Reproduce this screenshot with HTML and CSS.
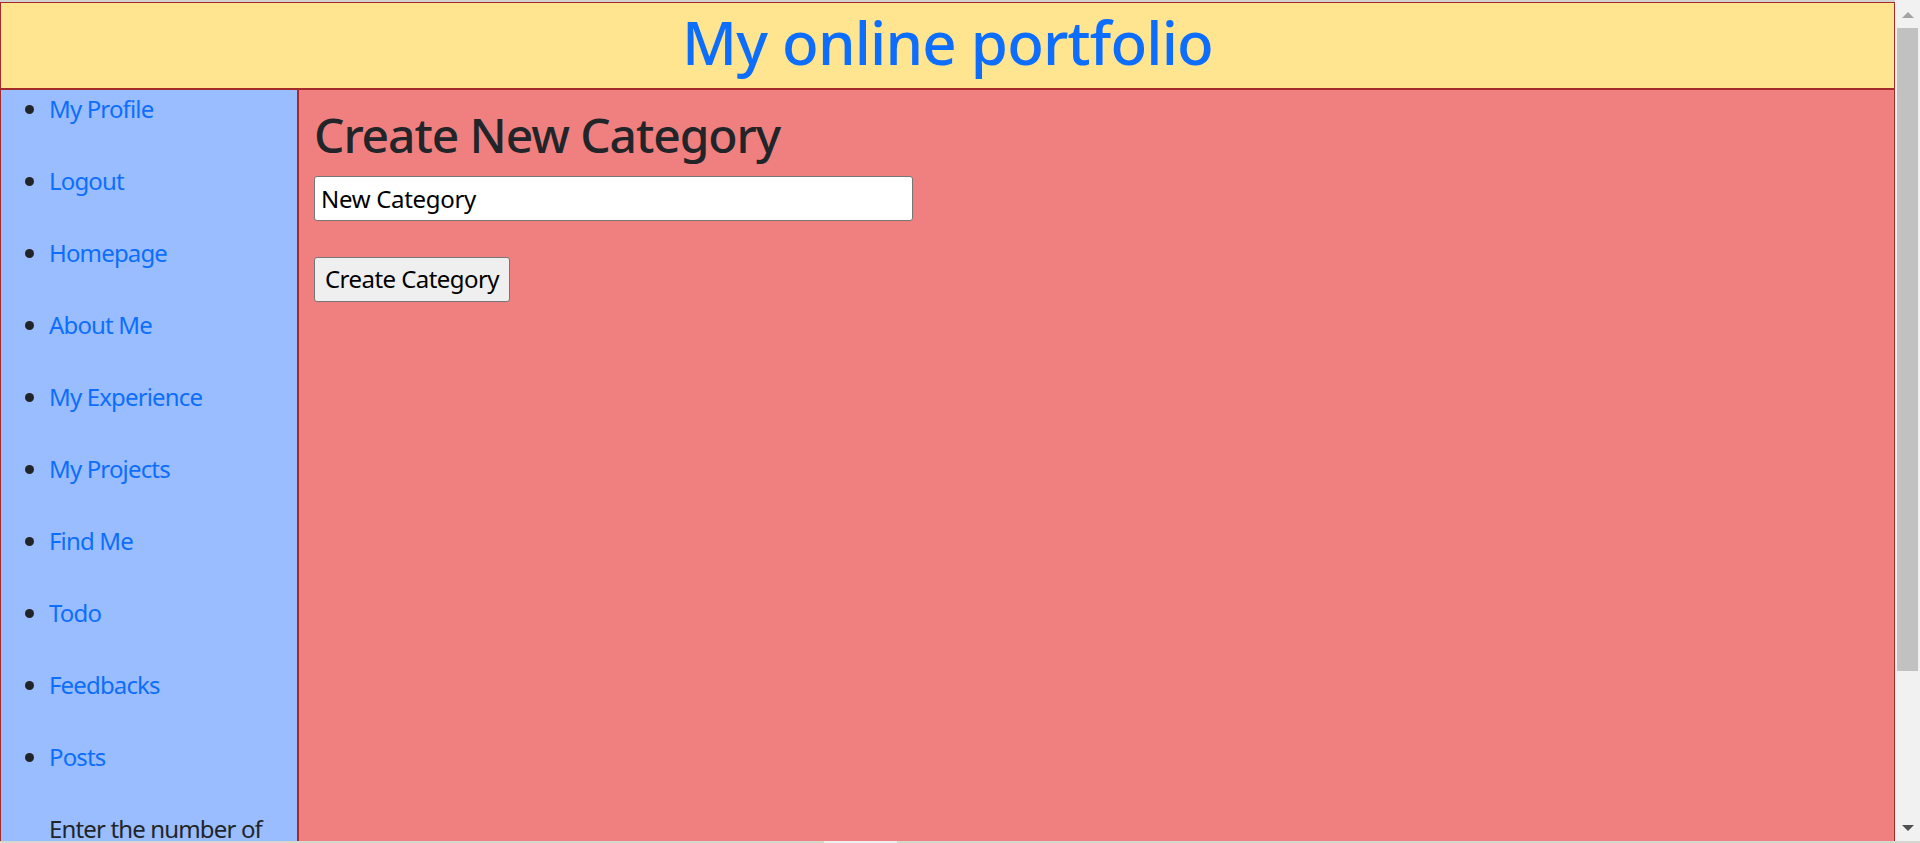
FILE: index.html
```html
<!DOCTYPE html>
<html lang="en">
<head>
<meta charset="utf-8">
<title>Create New Category</title>
<link rel="stylesheet" href="styles.css">
</head>
<body>
<div class="screen">
  <div class="screen-row">
    <div class="page">
      <div class="top-strip"></div>
      <header class="header">
        <h1 class="site-title">My online portfolio</h1>
      </header>
      <div class="layout">
        <nav class="sidebar">
          <ul class="nav-list">
            <li><a href="#">My Profile</a></li>
            <li><a href="#">Logout</a></li>
            <li><a href="#">Homepage</a></li>
            <li><a href="#">About Me</a></li>
            <li><a href="#">My Experience</a></li>
            <li><a href="#">My Projects</a></li>
            <li><a href="#">Find Me</a></li>
            <li><a href="#">Todo</a></li>
            <li><a href="#">Feedbacks</a></li>
            <li><a href="#">Posts</a></li>
            <li class="plain">Enter the number of posts to display:</li>
          </ul>
        </nav>
        <main class="main">
          <h2 class="page-title">Create New Category</h2>
          <form class="cat-form">
            <input class="cat-input" type="text" value="New Category">
            <button class="cat-button" type="button">Create Category</button>
          </form>
        </main>
      </div>
    </div>
    <div class="vscroll">
      <div class="arrow-up"></div>
      <div class="thumb"></div>
      <div class="track-rest"></div>
      <div class="arrow-down"></div>
    </div>
  </div>
  <div class="hscroll"><div class="hthumb"></div></div>
</div>
</body>
</html>
```

FILE: styles.css
```css
* { box-sizing: border-box; }
html, body { margin: 0; padding: 0; height: 100%; overflow: hidden; }
body {
  font-family: "Noto Sans", "Open Sans", sans-serif;
  font-size: 24px;
  line-height: 36px;
  color: #212529;
  background: #ffffff;
}
.screen { display: flex; flex-direction: column; height: 843px; }
.screen-row { display: flex; flex: 1; min-height: 0; }
.page { flex: 1; display: flex; flex-direction: column; min-width: 0; }
.top-strip { height: 2px; background: #d2d2d2; flex: none; }
.header {
  flex: none;
  height: 87px;
  background: #ffe590;
  border: 1px solid #a52a2a;
  display: flex;
  align-items: center;
  justify-content: center;
  padding-bottom: 7px;
}
.site-title {
  margin: 0;
  font-size: 60px;
  line-height: 72px;
  font-weight: 500;
  letter-spacing: -0.8px;
  color: #0d6efd;
}
.layout { flex: 1; display: flex; min-height: 0; overflow: hidden; }
.sidebar {
  flex: none;
  width: 298px;
  background: #99bdff;
  border: 1px solid #a52a2a;
  border-bottom: none;
}
.nav-list { margin: 0; padding: 1px 0 0 48px; letter-spacing: -0.85px; }
.nav-list li { line-height: 36px; margin-bottom: 36px; }
.nav-list li.plain { list-style: none; }
.nav-list a { color: #0d6efd; text-decoration: none; }
.main {
  flex: 1;
  background: #f08080;
  border: 1px solid #a52a2a;
  border-bottom: none;
  padding: 16px 15px;
}
.page-title {
  margin: 0 0 12px 0;
  font-size: 48px;
  line-height: 57.6px;
  font-weight: 500;
  letter-spacing: -1.1px;
  color: #212529;
}
.cat-form { display: flex; flex-direction: column; align-items: flex-start; gap: 36px; margin: 0; }
.cat-input {
  width: 599px;
  height: 45px;
  font-family: inherit;
  font-size: 24px;
  line-height: 36px;
  letter-spacing: -0.3px;
  color: #000;
  background: #fff;
  border: 1px solid #767676;
  border-radius: 3px;
  padding: 1px 6px;
}
.cat-button {
  height: 45px;
  font-family: inherit;
  font-size: 24px;
  line-height: 36px;
  letter-spacing: -0.55px;
  color: #000;
  background: #efefef;
  border: 1px solid #767676;
  border-radius: 3px;
  padding: 1px 10px;
}
.vscroll {
  flex: none;
  width: 25px;
  background: #f1f1f1;
  display: flex;
  flex-direction: column;
  align-items: center;
}
.arrow-up {
  margin-top: 12px;
  width: 0; height: 0;
  border-left: 6px solid transparent;
  border-right: 6px solid transparent;
  border-bottom: 6px solid #a3a3a3;
}
.thumb { margin-top: 10px; width: 21px; height: 643px; background: #c1c1c1; }
.track-rest { flex: 1; }
.arrow-down {
  margin-bottom: 10px;
  width: 0; height: 0;
  border-left: 6px solid transparent;
  border-right: 6px solid transparent;
  border-top: 6px solid #505050;
}
.hscroll { flex: none; height: 2px; background: #d6d8d0; padding-left: 824px; }
.hthumb { width: 73px; height: 2px; background: #f0f0f0; }
```
